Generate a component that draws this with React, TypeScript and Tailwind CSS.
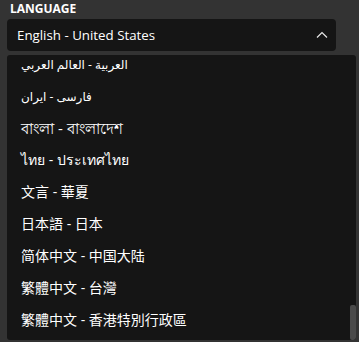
import React from "react";

const options: { t: string; c: string }[] = [
  { t: "العربية - العالم العربي", c: "text-[12px] pt-[1px]" },
  { t: "فارسی - ایران", c: "text-[12px] pt-[1px]" },
  { t: "বাংলা - বাংলাদেশ", c: "text-[15px]" },
  { t: "ไทย - ประเทศไทย", c: "text-[14px]" },
  { t: "文言 - 華夏", c: "text-[14px]" },
  { t: "日本語 - 日本", c: "text-[14px]" },
  { t: "简体中文 - 中国大陆", c: "text-[14px]" },
  { t: "繁體中文 - 台灣", c: "text-[14px]" },
  { t: "繁體中文 - 香港特別行政區", c: "text-[14px]" },
];

export default function App() {
  return (
    <div
      className="w-[359px] h-[342px] bg-[#333333] text-white overflow-hidden"
      style={{ fontFamily: '"Open Sans", "Noto Sans", "Noto Sans CJK TC", "DejaVu Sans", sans-serif' }}
    >
      <div className="pl-[10px] pt-[1px] h-[19px] text-[12px] font-bold leading-[16px]">LANGUAGE</div>
      <div className="ml-[7px] w-[329px] h-[32px] rounded-[4px] bg-[#151515] flex items-center justify-between pl-[10px] pr-[7px]">
        <span className="text-[13.3px] leading-[20px]">English - United States</span>
        <svg width="12" height="8" viewBox="0 0 12 8" fill="none" className="mr-[1px]">
          <path d="M1 6.5 L6 1.5 L11 6.5" stroke="#e8e8e8" strokeWidth="1.2" />
        </svg>
      </div>
      <div className="relative ml-[7px] mt-[4px] w-[349px] h-[285px] rounded-[3px] bg-[#151515] overflow-hidden">
        <div className="-mt-[7px]">
          {options.map((o) => (
            <div key={o.t} className={`h-[32px] flex items-center pl-[14px] leading-[20px] whitespace-nowrap ${o.c}`}>
              {o.t}
            </div>
          ))}
        </div>
        <div className="absolute right-0 bottom-0 w-[6px] h-[35px] rounded-[2px] bg-[#4a4a4a]" />
      </div>
    </div>
  );
}
